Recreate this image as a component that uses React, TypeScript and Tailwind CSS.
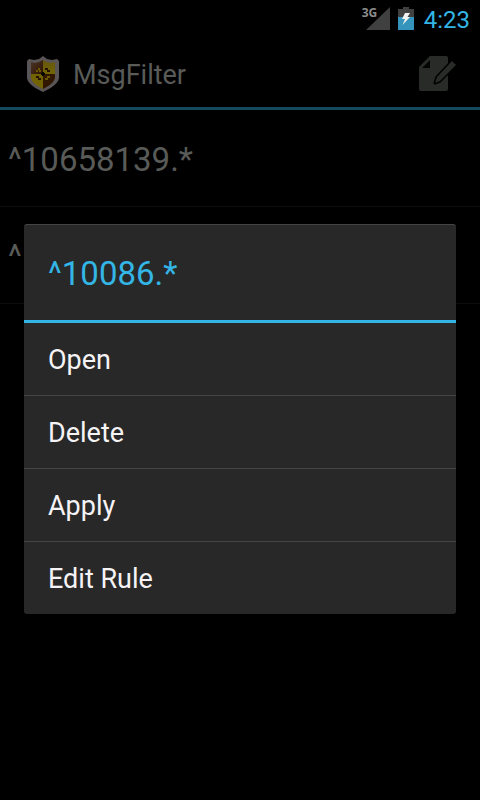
import React from "react";

const rules = ["^10658139.*", "^"];
const actions = ["Open", "Delete", "Apply", "Edit Rule"];

function SignalIcon() {
  return (
    <div className="relative h-6 w-7">
      <svg className="absolute right-0 top-0 h-6 w-6" viewBox="0 0 24 24" aria-hidden="true">
        <path d="M24 0V23H0Z" fill="#404040" />
      </svg>
      <span className="absolute left-0 top-0 font-['Open_Sans',sans-serif] text-xs leading-3 font-bold text-[#8c8c8c]">3G</span>
    </div>
  );
}

function BatteryIcon() {
  return (
    <svg className="h-6 w-4" viewBox="0 0 16 24" aria-hidden="true">
      <path d="M5 0H11V2H16V11H0V2H5Z" fill="#404040" />
      <path d="M0 10H16V23H0Z" fill="#3594bb" />
      <path d="M7 6H12L9.5 10H12L4.5 18L7 12H4Z" fill="#f2f2f2" />
    </svg>
  );
}

function ShieldIcon() {
  return (
    <svg className="h-9 w-8" viewBox="0 0 32 36" aria-hidden="true">
      <defs>
        <linearGradient id="brown" x1="0" y1="0" x2="1" y2="1">
          <stop offset="0" stopColor="#4d3528" />
          <stop offset="1" stopColor="#301500" />
        </linearGradient>
        <linearGradient id="gold" x1="0" y1="0" x2="0" y2="1">
          <stop offset="0" stopColor="#665510" />
          <stop offset="1" stopColor="#716600" />
        </linearGradient>
        <clipPath id="shield">
          <path d="M16 4L20 6L24 7L28 6V21C28 26 22 30 16 33C10 30 4 26 4 21V6L8 7L12 6Z" />
        </clipPath>
      </defs>
      <path d="M16 0L20 3L25 4L30 3L32 5V22C31 28 24 32 16 36C8 32 1 28 0 22V5L2 3L7 4L12 3Z" fill="#595556" />
      <g clipPath="url(#shield)">
        <path d="M4 3H16V18H4Z" fill="url(#brown)" />
        <path d="M16 3H28V18H16Z" fill="url(#gold)" />
        <path d="M4 18H16V34H4Z" fill="#716400" />
        <path d="M16 18H28V34H16Z" fill="#321700" />
      </g>
      <path d="M11 12H13V14H11ZM9 14H11V16H9ZM12 14H14V16H12Z" fill="#6d5a00" />
      <path d="M18 22H21V24H18ZM20 20H23V22H20Z" fill="#6b5700" />
      <path d="M18 12H21V14H18ZM20 14H23V16H20ZM9 20H12V22H9ZM11 22H14V24H11Z" fill="#241100" />
      <path d="M15 16H17V17H18V19H17V20H15V19H14V17H15Z" fill="#080500" />
    </svg>
  );
}

function ComposeIcon() {
  return (
    <svg className="h-9 w-10" viewBox="0 0 40 36" aria-hidden="true">
      <path d="M12 0H28Q30 0 30 2V33Q30 35 28 35H3Q1 35 1 33V11Z" fill="#292b29" />
      <path d="M12 4V12H4Z" fill="#030303" />
      <path d="M34 5L38 9L22 25L17 27L19 21Z" fill="#292b29" stroke="#000" strokeWidth="3" strokeLinejoin="round" />
      <path d="M34 5L38 9L22 25L17 27L19 21Z" fill="#292b29" />
    </svg>
  );
}

export default function App() {
  return (
    <div className="relative flex min-h-screen flex-col bg-black font-[Roboto,sans-serif]">
      <header className="flex h-[38px] items-center justify-end gap-[10px] pr-[10px]">
        <div className="flex gap-2">
          <SignalIcon />
          <BatteryIcon />
        </div>
        <time className="pt-0.5 text-2xl leading-6 text-[#33b5e5]">4:23</time>
      </header>

      <div className="flex h-18 items-center justify-between border-b-3 border-[#144a5e] pt-0.5 pr-[22px] pl-[27px]">
        <div className="flex items-center gap-[14px]">
          <ShieldIcon />
          <h1 className="pt-0.5 text-[27px] leading-8 text-[#595b58]">MsgFilter</h1>
        </div>
        <button type="button" aria-label="New rule">
          <ComposeIcon />
        </button>
      </div>

      <ul>
        {rules.map((rule) => (
          <li key={rule} className="flex h-[97px] items-center border-b border-[#0c0d0c] px-2 pt-1 text-[33px] text-[#595b58]">
            {rule}
          </li>
        ))}
      </ul>

      <div className="absolute inset-x-0 top-[38px] bottom-0 flex items-center px-6">
        <div role="dialog" aria-labelledby="dialog-title" className="w-full overflow-hidden rounded-[3px] border-t border-[#444444] bg-[#282828]">
          <h2 id="dialog-title" className="flex h-[98px] items-center border-b-3 border-[#33b5e5] px-6 pt-0.5 text-[33px] text-[#33b5e5]">
            ^10086.*
          </h2>
          <ul className="divide-y divide-[#444444]">
            {actions.map((action) => (
              <li key={action}>
                <button type="button" className="flex h-18 w-full items-center px-6 pt-0.5 text-left text-[27px] text-[#f5f3f5]">
                  {action}
                </button>
              </li>
            ))}
          </ul>
        </div>
      </div>
    </div>
  );
}
